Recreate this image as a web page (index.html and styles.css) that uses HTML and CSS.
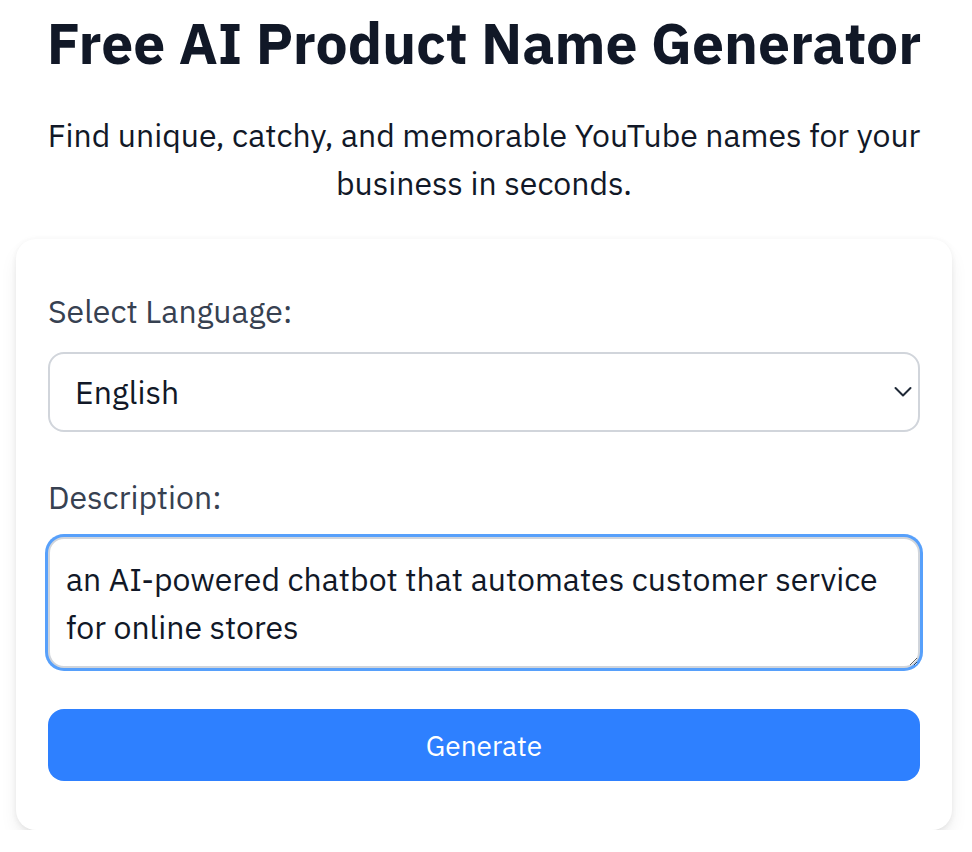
FILE: index.html
```html
<!DOCTYPE html>
<html lang="en">
<head>
<meta charset="utf-8">
<title>Free AI Product Name Generator</title>
<link rel="stylesheet" href="styles.css">
</head>
<body>
<main class="page">
  <h1 class="title">Free AI Product Name Generator</h1>
  <p class="subtitle">Find unique, catchy, and memorable YouTube names for your business in seconds.</p>
  <section class="card">
    <label class="label" for="lang">Select Language:</label>
    <div class="select-wrap">
      <select id="lang" class="select">
        <option>English</option>
      </select>
      <svg class="chevron" viewBox="0 0 20 12" width="20" height="12" aria-hidden="true">
        <path d="M2.5 2 L10 9.5 L17.5 2" fill="none" stroke="#1f2937" stroke-width="2" stroke-linecap="round" stroke-linejoin="round"/>
      </svg>
    </div>
    <label class="label label-desc" for="desc">Description:</label>
    <textarea id="desc" class="textarea">an AI-powered chatbot that automates customer service for online stores</textarea>
    <button class="button" type="button">Generate</button>
  </section>
</main>
</body>
</html>
```

FILE: styles.css
```css
* { box-sizing: border-box; }
html, body { margin: 0; padding: 0; background: #ffffff; }
body {
  font-family: "IBM Plex Sans", Inter, "Noto Sans", sans-serif;
  color: #111827;
}
.page {
  padding: 7px 20px 0 16px;
}
.title {
  margin: 0;
  font-size: 57px;
  line-height: 72px;
  font-weight: 700;
  text-align: center;
  color: #111827;
}
.subtitle {
  margin: 32px 0 0;
  font-size: 32px;
  line-height: 48px;
  text-align: center;
  color: #111827;
}
.card {
  margin-top: 32px;
  background: #ffffff;
  border-radius: 20px;
  padding: 48px 32px 49px;
  box-shadow: 0 10px 20px -4px rgba(0,0,0,0.10), 0 4px 8px -2px rgba(0,0,0,0.05), 0 0 6px rgba(0,0,0,0.04);
  display: flex;
  flex-direction: column;
}
.label {
  display: block;
  font-size: 32px;
  line-height: 48px;
  color: #374151;
  margin-bottom: 17px;
}
.select-wrap {
  position: relative;
  margin-bottom: 41px;
}
.select {
  -webkit-appearance: none;
  appearance: none;
  display: block;
  width: 100%;
  height: 80px;
  border: 2px solid #d1d5db;
  border-radius: 16px;
  background: #ffffff;
  font-family: inherit;
  font-size: 32px;
  color: #111827;
  padding: 0 25px;
  outline: none;
}
.chevron {
  position: absolute;
  right: 7px;
  top: 34px;
  pointer-events: none;
}
.label-desc {
  margin-bottom: 16px;
}
.textarea {
  display: block;
  width: 100%;
  height: 131px;
  border: 2px solid #d1d5db;
  border-radius: 16px;
  box-shadow: 0 0 0 3px #57a0fb;
  font-family: inherit;
  font-size: 32px;
  line-height: 48px;
  color: #111827;
  padding: 16px 16px 12px;
  resize: vertical;
  outline: none;
  margin-bottom: 41px;
}
.button {
  width: 100%;
  height: 72px;
  border: none;
  border-radius: 16px;
  background: #2e80ff;
  color: #ffffff;
  font-family: inherit;
  font-size: 28px;
  cursor: pointer;
}
```
